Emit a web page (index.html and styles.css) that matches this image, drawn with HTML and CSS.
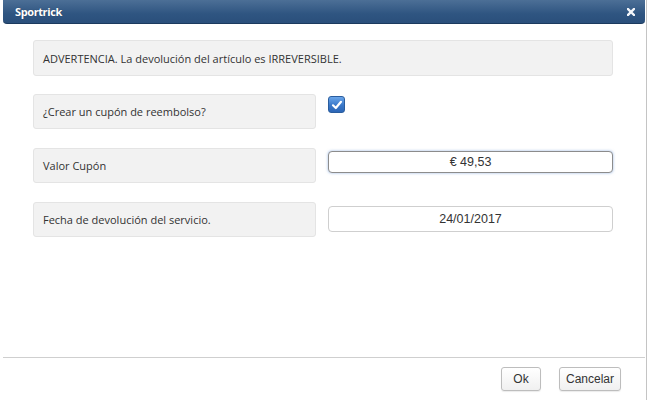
FILE: index.html
```html
<!DOCTYPE html>
<html lang="es">
<head>
<meta charset="utf-8">
<title>Sportrick</title>
<link rel="stylesheet" href="styles.css">
</head>
<body>
<div class="page">
  <div class="dialog">
    <div class="titlebar">
      <span class="title">Sportrick</span>
      <svg class="close" width="8" height="8" viewBox="0 0 8 8"><path d="M1 1 L7 7 M7 1 L1 7" stroke="#f4f6fa" stroke-width="2.4" stroke-linecap="square"/></svg>
    </div>
    <div class="content">
      <div class="warning">ADVERTENCIA. La devolución del artículo es IRREVERSIBLE.</div>
      <div class="row">
        <div class="label">¿Crear un cupón de reembolso?</div>
        <div class="control">
          <span class="checkbox">
            <svg width="12" height="12" viewBox="0 0 12 12"><path d="M2 6.3 L4.8 9 L10 2.8" fill="none" stroke="#fff" stroke-width="2.2" stroke-linecap="round" stroke-linejoin="round"/></svg>
          </span>
        </div>
      </div>
      <div class="row">
        <div class="label">Valor Cupón</div>
        <div class="control">
          <div class="input focused">€ 49,53</div>
        </div>
      </div>
      <div class="row">
        <div class="label">Fecha de devolución del servicio.</div>
        <div class="control">
          <div class="input tall">24/01/2017</div>
        </div>
      </div>
    </div>
    <div class="footer">
      <button class="btn ok">Ok</button>
      <button class="btn cancel">Cancelar</button>
    </div>
  </div>
  <div class="edge"></div>
</div>
</body>
</html>
```
FILE: styles.css
```css
html, body {
  margin: 0;
  padding: 0;
  background: #fff;
}
.page {
  display: flex;
  height: 400px;
  width: 647px;
  overflow: hidden;
}
.dialog {
  flex: 0 0 640px;
  margin-left: 3px;
  display: flex;
  flex-direction: column;
}
.edge {
  flex: 1;
  margin-left: 1px;
  border-left: 1px solid #c4c4c4;
  background: #fff;
}
.titlebar {
  height: 23px;
  border-bottom: 1px solid #1b3a5e;
  border-radius: 0 0 4px 4px;
  background: linear-gradient(#4c6f96, #2f5581 60%, #2a4f7b);
  display: flex;
  align-items: center;
  justify-content: space-between;
  padding: 0 10px 0 12px;
  color: #fff;
  font-family: "Open Sans", "DejaVu Sans", sans-serif;
}
.title {
  font-size: 11px;
  font-weight: 700;
  letter-spacing: -0.4px;
  text-shadow: 0 0 1px rgba(0,0,0,0.4);
}
.close {
  display: block;
  margin-top: 1px;
}
.content {
  flex: 1;
  padding: 16px 32px 0 30px;
  font-family: "Open Sans", "DejaVu Sans", sans-serif;
  font-size: 11px;
  color: #333;
}
.warning {
  height: 34px;
  display: flex;
  align-items: center;
  padding-left: 9px;
  background: #f2f2f2;
  border: 1px solid #e4e4e4;
  border-radius: 3px;
  margin-bottom: 18px;
}
.row {
  display: grid;
  grid-template-columns: 283px 285px;
  column-gap: 12px;
  margin-bottom: 19px;
}
.label {
  height: 33px;
  display: flex;
  align-items: center;
  padding-left: 9px;
  background: #f2f2f2;
  border: 1px solid #e4e4e4;
  border-radius: 3px;
}
.control {
  padding-top: 2px;
}
.checkbox {
  display: flex;
  align-items: center;
  justify-content: center;
  width: 15px;
  height: 15px;
  border: 1px solid #2a5d9e;
  border-radius: 3px;
  background: linear-gradient(#6aa6ea, #3a78c9 55%, #2c66b6);
}
.input {
  box-sizing: border-box;
  height: 22px;
  margin-top: 1px;
  border: 1px solid #bfbfbf;
  border-radius: 4px;
  display: flex;
  align-items: center;
  justify-content: center;
  font-family: "Liberation Sans", Arial, sans-serif;
  font-size: 12.5px;
  color: #333;
  background: #fff;
}
.input.focused {
  border-color: #8c8c8c;
  box-shadow: 0 0 3px rgba(90, 140, 210, 0.6);
}
.input.tall {
  height: 26px;
  margin-top: 2px;
  border-color: #cfcfcf;
}
.footer {
  border-top: 1px solid #cfcfcf;
  display: flex;
  justify-content: flex-end;
  align-items: flex-start;
  gap: 18px;
  padding: 9px 24px 0 0;
  box-sizing: border-box;
  height: 43px;
}
.btn {
  box-sizing: border-box;
  height: 24px;
  padding: 0;
  font-family: "Liberation Sans", Arial, sans-serif;
  font-size: 12px;
  color: #333;
  border: 1px solid #bdbdbd;
  border-radius: 3px;
  background: linear-gradient(#ffffff, #f0f0f0);
  box-shadow: 0 1px 1px rgba(0,0,0,0.08);
}
.btn.ok {
  width: 40px;
}
.btn.cancel {
  width: 62px;
}
```
